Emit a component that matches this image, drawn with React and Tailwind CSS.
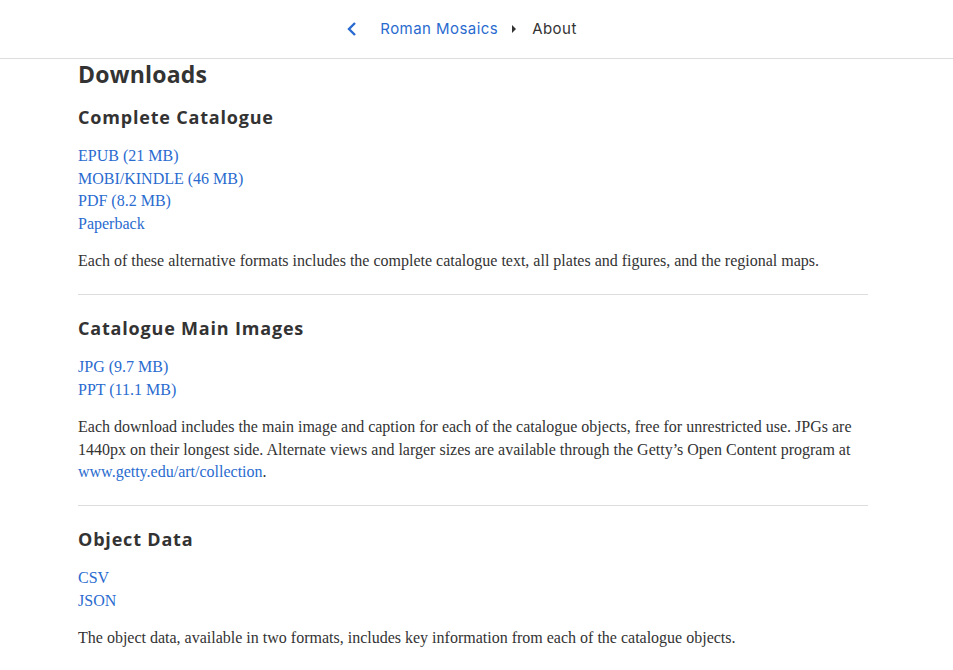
function Section({ title, links, children, last }) {
    return (
        <section className={last ? 'pt-[20.5px]' : 'pt-[20.5px] pb-[21px] border-b border-[#dddddd]'}>
            <h3 className="text-[18px] leading-[26px] font-bold tracking-[0.045em] text-[#333] font-['Open_Sans',sans-serif] mb-[15px]">{title}</h3>
            <ul className="text-[16px] leading-[22.5px] font-['Liberation_Serif',serif]">
                {links.map(l => (
                    <li key={l}><a href="#" className="text-[#2a6bcf]">{l}</a></li>
                ))}
            </ul>
            <p className="mt-[15px] text-[16px] leading-[22.5px] text-[#333] font-['Liberation_Serif',serif]">{children}</p>
        </section>
    )
}

export default function App() {
    return (
        <div className="bg-white min-h-[670px]">
            <header className="h-[59px] border-b border-[#dddddd] flex items-center justify-center pr-[31px] text-[15px] tracking-[0.03em] font-['Inter',sans-serif]">
                <svg width="14" height="18" viewBox="0 0 14 18" className="mr-[21px]">
                    <path d="M10 3 L4 9 L10 15" fill="none" stroke="#2a6bcf" strokeWidth="2.4" />
                </svg>
                <a href="#" className="text-[#2a6bcf]">Roman Mosaics</a>
                <svg width="8" height="10" viewBox="0 0 8 10" className="ml-[12px] mr-[14px]">
                    <path d="M2 1 L6 5 L2 9 Z" fill="#333" />
                </svg>
                <span className="text-[#333]">About</span>
            </header>
            <main className="ml-[78px] w-[790px]">
                <h2 className="pt-[2px] -mb-[3.5px] text-[23px] leading-[26px] font-bold tracking-[0.01em] text-[#333] font-['Open_Sans',sans-serif]">Downloads</h2>
                <Section title="Complete Catalogue" links={['EPUB (21 MB)', 'MOBI/KINDLE (46 MB)', 'PDF (8.2 MB)', 'Paperback']}>
                    Each of these alternative formats includes the complete catalogue text, all plates and figures, and the regional maps.
                </Section>
                <Section title="Catalogue Main Images" links={['JPG (9.7 MB)', 'PPT (11.1 MB)']}>
                    Each download includes the main image and caption for each of the catalogue objects, free for unrestricted use. JPGs are 1440px on their longest side. Alternate views and larger sizes are available through the Getty’s Open Content program at <a href="#" className="text-[#2a6bcf]">www.getty.edu/art/collection</a>.
                </Section>
                <Section last title="Object Data" links={['CSV', 'JSON']}>
                    The object data, available in two formats, includes key information from each of the catalogue objects.
                </Section>
            </main>
        </div>
    )
}
